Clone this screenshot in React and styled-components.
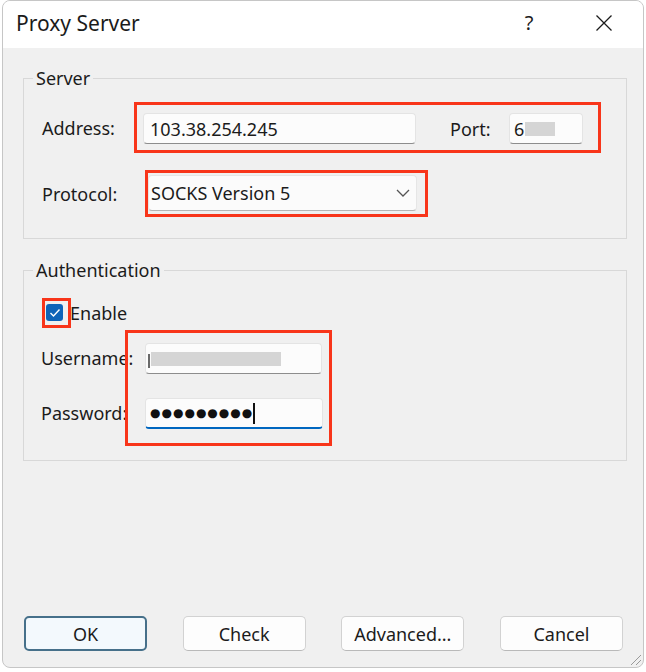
import React from 'react';
import styled, { createGlobalStyle } from 'styled-components';

const Global = createGlobalStyle`
  html, body { margin: 0; padding: 0; background: #ffffff; }
  body { font-family: "Noto Sans", "Liberation Sans", sans-serif; color: #1b1b1b; }
  * { box-sizing: border-box; }
`;

const RED = '#f8351a';

const Window = styled.div`
  position: relative;
  margin-left: 2px;
  width: 642px;
  height: 668px;
  border: 1px solid #c6c6c6;
  border-radius: 8px;
  overflow: hidden;
  display: flex;
  flex-direction: column;
  background: #f0f0f0;
`;

const TitleBar = styled.div`
  height: 47px;
  flex: none;
  display: flex;
  align-items: center;
  padding: 0 0 4px 13px;
  background: #ffffff;
`;

const Title = styled.div`
  flex: 1;
  font-size: 21px;
  line-height: 26px;
  color: #1b1b1b;
`;

const CaptionButton = styled.div`
  width: 46px;
  height: 40px;
  display: flex;
  align-items: center;
  justify-content: center;
  margin-right: ${p => p.$gap || 0}px;
  font-size: 20px;
  color: #1b1b1b;
`;

const Body = styled.div`
  flex: 1;
  display: flex;
  flex-direction: column;
  padding: 19px 16px 16px 20px;
`;

const GroupBox = styled.fieldset`
  margin: ${p => p.$top || 0}px 0 0 0;
  padding: 0;
  min-width: 0;
  border: 1px solid #d8d8d8;
`;

const Legend = styled.legend`
  margin-left: 9px;
  padding: 0 3px;
  font-size: 18px;
  line-height: 22px;
  color: #1b1b1b;
`;

const GroupContent = styled.div`
  display: flex;
  flex-direction: column;
  gap: ${p => p.$gap || 0}px;
  padding: ${p => p.$pad};
`;

const Row = styled.div`
  display: flex;
  align-items: ${p => p.$align || 'center'};
  margin-left: ${p => p.$shift || 0}px;
`;

const Label = styled.div`
  flex: none;
  width: ${p => p.$w}px;
  height: ${p => p.$h || 'auto'};
  line-height: ${p => (p.$h ? p.$h : '24px')};
  font-size: 18px;
  white-space: nowrap;
  color: #1b1b1b;
`;

const Highlight = styled.div`
  position: relative;
  flex: none;
  display: flex;
  flex-direction: ${p => p.$dir || 'row'};
  align-items: ${p => (p.$dir === 'column' ? 'flex-start' : 'center')};
  gap: ${p => p.$gap || 0}px;
  border: 3px solid ${RED};
  padding: ${p => p.$pad};
`;

const TextField = styled.div`
  flex: none;
  width: ${p => p.$w}px;
  height: 31px;
  display: flex;
  align-items: center;
  padding-left: ${p => p.$pl ?? 6}px;
  background: #fcfcfc;
  border: 1px solid #e4e4e4;
  border-bottom: ${p => (p.$focused ? '2px solid #0067c0' : '1px solid #8d8d8d')};
  border-radius: 4px;
  font-size: 18px;
  color: #1b1b1b;
  white-space: nowrap;
  overflow: hidden;
`;

const PortLabel = styled.div`
  flex: none;
  width: 59px;
  margin-left: 34px;
  font-size: 18px;
  line-height: 24px;
  color: #1b1b1b;
`;

const Redacted = styled.span`
  display: inline-block;
  width: ${p => p.$w}px;
  height: ${p => p.$h}px;
  margin-left: ${p => p.$ml || 0}px;
  background: #d5d5d5;
  filter: blur(0.6px);
`;

const Stem = styled.span`
  display: inline-block;
  width: 2px;
  height: 14px;
  margin-top: 4px;
  background: #6a6a6a;
`;

const Select = styled.div`
  width: 269px;
  height: 36px;
  display: flex;
  align-items: center;
  justify-content: space-between;
  padding: 0 6px 0 2px;
  background: #fbfbfb;
  border: 1px solid #e6e6e6;
  border-bottom-color: #b5b5b5;
  border-radius: 4px;
  font-size: 18px;
  color: #1b1b1b;
`;

const Checkbox = styled.div`
  width: 17px;
  height: 17px;
  border-radius: 3px;
  background: #0f64b8;
  display: flex;
  align-items: center;
  justify-content: center;
`;

const CheckText = styled.div`
  font-size: 18px;
  line-height: 24px;
  margin-left: -1px;
  color: #1b1b1b;
`;

const LabelColumn = styled.div`
  flex: none;
  width: 84px;
  display: flex;
  flex-direction: column;
  gap: 24px;
  padding-top: 13px;
`;

const Dots = styled.span`
  font-family: "DejaVu Sans", sans-serif;
  font-size: 12px;
  letter-spacing: 1px;
  color: #111;
`;

const Caret = styled.span`
  display: inline-block;
  width: 2px;
  height: 21px;
  margin-left: 0;
  background: #111;
`;

const ButtonRow = styled.div`
  margin-top: auto;
  display: flex;
  justify-content: space-between;
  padding: 0 4px 0 1px;
`;

const Button = styled.div`
  width: 123px;
  height: 35px;
  display: flex;
  align-items: center;
  justify-content: center;
  border-radius: 5px;
  font-size: 18px;
  color: #1b1b1b;
  background: ${p => (p.$primary ? '#f3f9fd' : '#fdfdfd')};
  border: ${p => (p.$primary ? '2px solid #46708a' : '1px solid #d2d2d2')};
  border-bottom-color: ${p => (p.$primary ? '#46708a' : '#b9b9b9')};
`;

const Grip = styled.svg`
  position: absolute;
  right: 1px;
  bottom: 1px;
`;

export default function App() {
  return (
    <>
      <Global />
      <Window>
        <TitleBar>
          <Title>Proxy Server</Title>
          <CaptionButton $gap={29}>?</CaptionButton>
          <CaptionButton $gap={16}>
            <svg width="18" height="18" viewBox="0 0 18 18">
              <path d="M1.5 1.5 L16.5 16.5 M16.5 1.5 L1.5 16.5" stroke="#1b1b1b" strokeWidth="1.3" fill="none" />
            </svg>
          </CaptionButton>
        </TitleBar>
        <Body>
          <GroupBox>
            <Legend>Server</Legend>
            <GroupContent $gap={17} $pad="13px 0 21px 18px">
              <Row>
                <Label $w={92}>Address:</Label>
                <Highlight $pad="8px 15px 6px 6px">
                  <TextField $w={273}>103.38.254.245</TextField>
                  <PortLabel>Port:</PortLabel>
                  <TextField $w={74} $pl={4}>
                    6<Redacted $w={30} $h={14} $ml={1} />
                  </TextField>
                </Highlight>
              </Row>
              <Row>
                <Label $w={103}>Protocol:</Label>
                <Highlight $pad="2px 8px 3px 0">
                  <Select>
                    <span>SOCKS Version 5</span>
                    <svg width="14" height="8" viewBox="0 0 14 8">
                      <path d="M1 1 L7 7 L13 1" stroke="#555" strokeWidth="1.3" fill="none" />
                    </svg>
                  </Select>
                </Highlight>
              </Row>
            </GroupContent>
          </GroupBox>

          <GroupBox $top={20}>
            <Legend>Authentication</Legend>
            <GroupContent $gap={2} $pad="17px 0 14px 18px">
              <Row>
                <Highlight $pad="3px 5px 4px 1px">
                  <Checkbox>
                    <svg width="12" height="10" viewBox="0 0 12 10">
                      <path d="M1.5 5 L4.5 8 L10.5 1.5" stroke="#fff" strokeWidth="1.4" fill="none" />
                    </svg>
                  </Checkbox>
                </Highlight>
                <CheckText>Enable</CheckText>
              </Row>
              <Row $align="flex-start" $shift={-1}>
                <LabelColumn>
                  <Label $w={84} $h="31px">Username:</Label>
                  <Label $w={84} $h="31px">Password:</Label>
                </LabelColumn>
                <Highlight $dir="column" $gap={24} $pad="10px 6px 14px 17px">
                  <TextField $w={177} $pl={2}>
                    <Stem />
                    <Redacted $w={130} $h={14} $ml={1} />
                  </TextField>
                  <TextField $w={178} $pl={4} $focused>
                    <Dots>●●●●●●●●●</Dots>
                    <Caret />
                  </TextField>
                </Highlight>
              </Row>
            </GroupContent>
          </GroupBox>

          <ButtonRow>
            <Button $primary>OK</Button>
            <Button>Check</Button>
            <Button>Advanced...</Button>
            <Button>Cancel</Button>
          </ButtonRow>
        </Body>
        <Grip width="14" height="14" viewBox="0 0 14 14">
          <path d="M13 3 L3 13 M13 8 L8 13" stroke="#9a9a9a" strokeWidth="1" fill="none" />
        </Grip>
      </Window>
    </>
  );
}
